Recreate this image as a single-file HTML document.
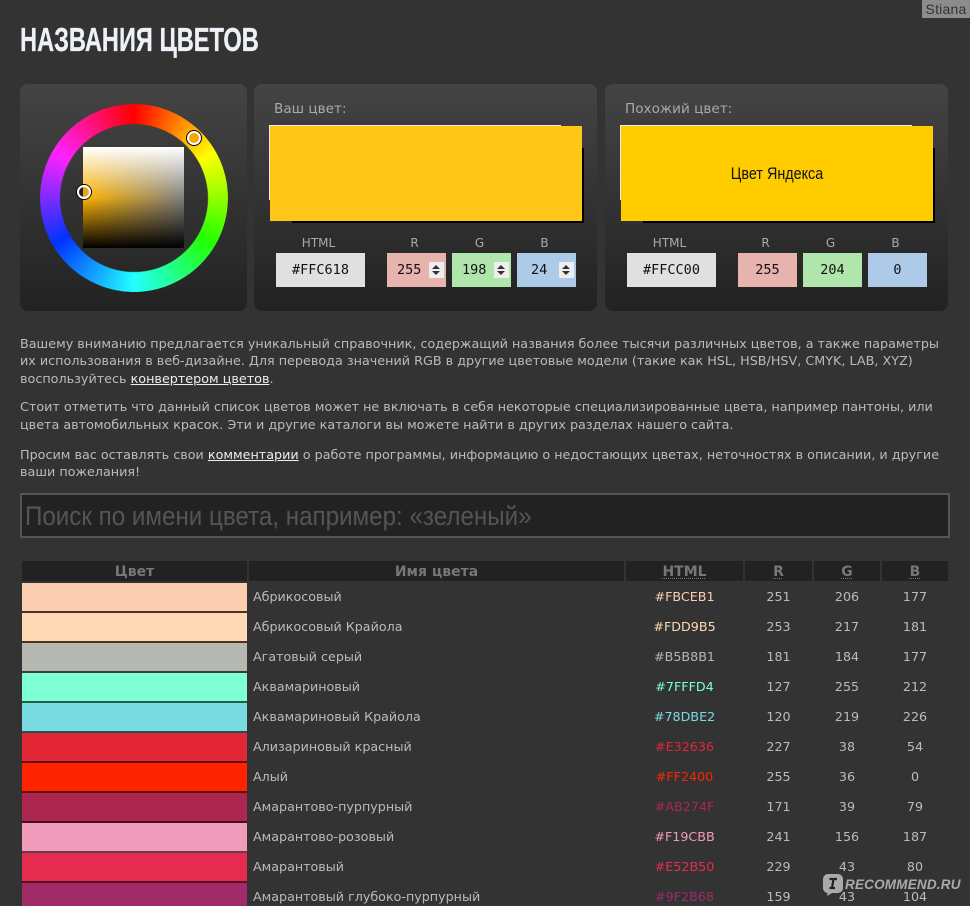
<!DOCTYPE html>
<html lang="ru"><head><meta charset="utf-8"><title>Названия цветов</title>
<style>
html,body{margin:0;padding:0;background:#333;}
html{width:970px;height:906px;overflow:hidden;}
#wrap{width:970px;height:906px;position:relative;overflow:hidden;font-family:"DejaVu Sans","Liberation Sans",sans-serif;font-size:12.7px;color:#bbb;}
.a{position:absolute;}
h1{position:absolute;left:20px;top:20px;margin:0;font:bold 33px/40px "Liberation Sans",sans-serif;color:#eef2f8;white-space:nowrap;transform:scaleX(.716);transform-origin:0 0;-webkit-text-stroke:.3px #eef2f8;}
.panel{position:absolute;top:84px;height:227px;border-radius:8px;background:linear-gradient(#444,#222);}
.lab{position:absolute;font-size:13.6px;line-height:18px;color:#aaa;white-space:nowrap;}
.box{position:absolute;top:126px;width:312px;height:95px;}
.shd{position:absolute;top:148px;width:292px;height:75px;background:#000;}
.edge1{position:absolute;top:125px;width:292px;height:1px;background:#eee;}
.edge2{position:absolute;top:125px;width:1px;height:75px;background:#eee;}
.fld{position:absolute;top:253px;height:34px;line-height:35px;text-align:center;font-family:"DejaVu Sans Mono","Liberation Mono",monospace;font-size:13.500px;color:#111;}
.h{background:#e0e0e0;width:89px;}.r{background:#e6b3ad;width:59px;}.g{background:#b0e6ac;width:59px;}.b{background:#adcae9;width:59px;}
.sp{position:absolute;top:262px;width:15px;height:16px;background:#eee;}
.sp i{position:absolute;left:3px;width:0;height:0;border-left:4.5px solid transparent;border-right:4.5px solid transparent;}
.sp i:first-child{top:3px;border-bottom:4px solid #333;}
.sp i:last-child{top:9px;border-top:4px solid #333;}
.cl{position:absolute;font-size:12px;line-height:14px;color:#aaa;text-align:center;}
p{position:absolute;left:20px;margin:0;width:930px;line-height:17.5px;color:#bbb;white-space:nowrap;font-size:12.75px;}
p a{color:#eee;text-decoration:underline;}
.search{position:absolute;left:20px;top:493px;width:926px;height:41px;border:2px solid #555;background:#222;}
.search span{position:absolute;left:3px;top:4px;font:27px/34px "Liberation Sans",sans-serif;color:#555;white-space:nowrap;transform:scaleX(.895);transform-origin:0 0;}
.th{position:absolute;top:561px;height:20px;background:#222;text-align:center;font-weight:bold;font-size:14px;line-height:22px;color:#777;}
.th u{text-decoration:underline dotted 1px;text-underline-offset:2px;}
.row{position:absolute;left:0;width:970px;height:30px;}
.row b{position:absolute;left:22px;top:0;width:225px;height:28px;}
.row s{position:absolute;left:22px;top:28px;width:225px;height:2px;}
.row span{position:absolute;white-space:nowrap;top:0;line-height:28px;}
.n{left:253px;color:#bbb;}
.x{left:626px;width:117px;text-align:center;}
.c1,.c2,.c3{color:#bbb;text-align:center;}
.c1{left:745px;width:67px;}.c2{left:814px;width:66px;}.c3{left:882px;width:66px;}
</style></head><body><div id="wrap">
<h1>НАЗВАНИЯ ЦВЕТОВ</h1>
<div class="a" style="left:922px;top:0;width:48px;height:18px;background:#8c8c8c;color:#333;font:14px/19px 'Liberation Sans',sans-serif;text-align:center;letter-spacing:.2px;">Stiana</div>

<div class="panel" style="left:20px;width:227px;"></div>
<div class="panel" style="left:254px;width:343px;"></div>
<div class="panel" style="left:605px;width:343px;"></div>

<div class="a" style="left:40px;top:104px;width:188px;height:188px;border-radius:50%;background:conic-gradient(#f00,#ff0 60deg,#2f0 120deg,#2ff 180deg,#03f 240deg,#f2f 300deg,#f00);-webkit-mask:radial-gradient(circle,transparent 73.5px,#000 74.5px);mask:radial-gradient(circle,transparent 73.5px,#000 74.5px);"></div>
<div class="a" style="left:83px;top:147px;width:101px;height:101px;background:linear-gradient(rgba(255,255,255,1),rgba(255,255,255,0) 50%,rgba(0,0,0,0) 50%,rgba(0,0,0,1)),linear-gradient(90deg,#ffb400,#808080);"></div>
<div class="a" style="left:187px;top:131px;width:10px;height:10px;border:2px solid #fff;border-radius:50%;background:#f5a800;box-shadow:0 0 0 1px #000;"></div>
<div class="a" style="left:77px;top:185px;width:10px;height:10px;border:2px solid #fff;border-radius:50%;background:linear-gradient(90deg,#222 40%,#e9a71a 40%);box-shadow:0 0 0 1px #000;"></div>

<div class="lab" style="left:274px;top:100px;">Ваш цвет:</div>
<div class="edge1" style="left:269px;"></div><div class="edge2" style="left:269px;"></div>
<div class="shd" style="left:292px;"></div>
<div class="box" style="left:270px;background:#ffc618;"></div>
<div class="cl" style="left:276px;top:236px;width:85px;">HTML</div>
<div class="cl" style="left:387px;top:236px;width:55px;">R</div>
<div class="cl" style="left:452px;top:236px;width:55px;">G</div>
<div class="cl" style="left:517px;top:236px;width:55px;">B</div>
<div class="fld h" style="left:276px;">#FFC618</div>
<div class="fld r" style="left:387px;text-align:left;"><span style="padding-left:10px;">255</span></div>
<div class="fld g" style="left:452px;text-align:left;"><span style="padding-left:10px;">198</span></div>
<div class="fld b" style="left:517px;text-align:left;"><span style="padding-left:14px;">24</span></div>
<div class="sp" style="left:429px;"><i></i><i></i></div>
<div class="sp" style="left:494px;"><i></i><i></i></div>
<div class="sp" style="left:559px;"><i></i><i></i></div>

<div class="lab" style="left:625px;top:100px;">Похожий цвет:</div>
<div class="edge1" style="left:620px;"></div><div class="edge2" style="left:620px;"></div>
<div class="shd" style="left:643px;"></div>
<div class="box" style="left:621px;background:#fc0;"></div>
<div class="a" style="left:621px;top:126px;width:312px;height:95px;text-align:center;color:#111;font:16.500px/97px 'Liberation Sans',sans-serif;transform:scaleX(.87);">Цвет Яндекса</div>
<div class="cl" style="left:627px;top:236px;width:85px;">HTML</div>
<div class="cl" style="left:738px;top:236px;width:55px;">R</div>
<div class="cl" style="left:803px;top:236px;width:55px;">G</div>
<div class="cl" style="left:868px;top:236px;width:55px;">B</div>
<div class="fld h" style="left:627px;">#FFCC00</div>
<div class="fld r" style="left:738px;">255</div>
<div class="fld g" style="left:803px;">204</div>
<div class="fld b" style="left:868px;">0</div>

<p style="top:335.5px;">Вашему вниманию предлагается уникальный справочник, содержащий названия более тысячи различных цветов, а также параметры<br>их использования в веб-дизайне. Для перевода значений RGB в другие цветовые модели (такие как HSL, HSB/HSV, CMYK, LAB, XYZ)<br>воспользуйтесь <a>конвертером цветов</a>.</p>
<p style="top:399.4px;">Стоит отметить что данный список цветов может не включать в себя некоторые специализированные цвета, например пантоны, или<br>цвета автомобильных красок. Эти и другие каталоги вы можете найти в других разделах нашего сайта.</p>
<p style="top:446.5px;">Просим вас оставлять свои <a>комментарии</a> о работе программы, информацию о недостающих цветах, неточностях в описании, и другие<br>ваши пожелания!</p>

<div class="search"><span>Поиск по имени цвета, например: «зеленый»</span></div>

<div class="th" style="left:22px;width:225px;">Цвет</div>
<div class="th" style="left:249px;width:375px;">Имя цвета</div>
<div class="th" style="left:626px;width:117px;"><u>HTML</u></div>
<div class="th" style="left:745px;width:67px;"><u>R</u></div>
<div class="th" style="left:814px;width:66px;"><u>G</u></div>
<div class="th" style="left:882px;width:66px;"><u>B</u></div>

<div class="row" style="top:583px;"><b style="background:#FBCEB1"></b><s style="background:#4d3020"></s><span class="n">Абрикосовый</span><span class="x" style="color:#FBCEB1">#FBCEB1</span><span class="c1">251</span><span class="c2">206</span><span class="c3">177</span></div>
<div class="row" style="top:613px;"><b style="background:#FDD9B5"></b><s style="background:#4d3020"></s><span class="n">Абрикосовый Крайола</span><span class="x" style="color:#FDD9B5">#FDD9B5</span><span class="c1">253</span><span class="c2">217</span><span class="c3">181</span></div>
<div class="row" style="top:643px;"><b style="background:#B5B8B1"></b><s style="background:#3a3c38"></s><span class="n">Агатовый серый</span><span class="x" style="color:#B5B8B1">#B5B8B1</span><span class="c1">181</span><span class="c2">184</span><span class="c3">177</span></div>
<div class="row" style="top:673px;"><b style="background:#7FFFD4"></b><s style="background:#206048"></s><span class="n">Аквамариновый</span><span class="x" style="color:#7FFFD4">#7FFFD4</span><span class="c1">127</span><span class="c2">255</span><span class="c3">212</span></div>
<div class="row" style="top:703px;"><b style="background:#78DBE2"></b><s style="background:#205055"></s><span class="n">Аквамариновый Крайола</span><span class="x" style="color:#78DBE2">#78DBE2</span><span class="c1">120</span><span class="c2">219</span><span class="c3">226</span></div>
<div class="row" style="top:733px;"><b style="background:#E32636"></b><s style="background:#5a1015"></s><span class="n">Ализариновый красный</span><span class="x" style="color:#E32636">#E32636</span><span class="c1">227</span><span class="c2">38</span><span class="c3">54</span></div>
<div class="row" style="top:763px;"><b style="background:#FF2400"></b><s style="background:#641008"></s><span class="n">Алый</span><span class="x" style="color:#FF2400">#FF2400</span><span class="c1">255</span><span class="c2">36</span><span class="c3">0</span></div>
<div class="row" style="top:793px;"><b style="background:#AB274F"></b><s style="background:#441020"></s><span class="n">Амарантово-пурпурный</span><span class="x" style="color:#AB274F">#AB274F</span><span class="c1">171</span><span class="c2">39</span><span class="c3">79</span></div>
<div class="row" style="top:823px;"><b style="background:#F19CBB"></b><s style="background:#5f3d4a"></s><span class="n">Амарантово-розовый</span><span class="x" style="color:#F19CBB">#F19CBB</span><span class="c1">241</span><span class="c2">156</span><span class="c3">187</span></div>
<div class="row" style="top:853px;"><b style="background:#E52B50"></b><s style="background:#5a1120"></s><span class="n">Амарантовый</span><span class="x" style="color:#E52B50">#E52B50</span><span class="c1">229</span><span class="c2">43</span><span class="c3">80</span></div>
<div class="row" style="top:883px;"><b style="background:#9F2B68"></b><span class="n">Амарантовый глубоко-пурпурный</span><span class="x" style="color:#9F2B68">#9F2B68</span><span class="c1">159</span><span class="c2">43</span><span class="c3">104</span></div>

<svg class="a" style="left:822px;top:873px;" width="22" height="24" viewBox="0 0 22 24"><path d="M6 1H16a5 5 0 0 1 5 5V15a5 5 0 0 1-5 5H10L5 23 5.500 20A5 5 0 0 1 1 15V6A5 5 0 0 1 6 1Z" fill="#aaa"/><path d="M7.500 6H15M7.500 15H13M11.500 6 10 15" stroke="#222" stroke-width="2.200" fill="none"/></svg>
<div class="a" style="left:845px;top:876px;font:italic bold 13.500px/18px 'Liberation Sans',sans-serif;color:#aaa;letter-spacing:.2px;white-space:nowrap;">RECOMMEND.RU</div>
</div></body></html>
